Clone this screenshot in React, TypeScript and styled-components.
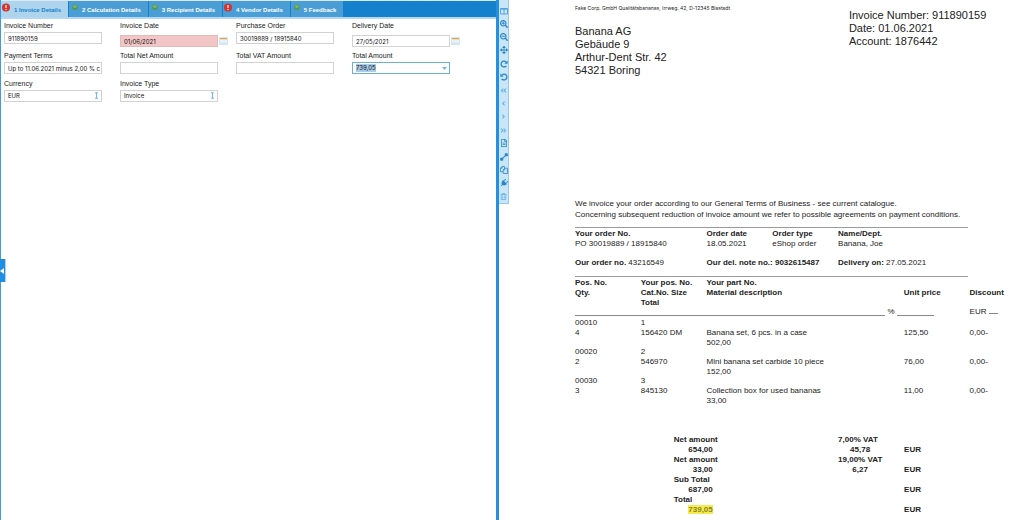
import React from "react";
import styled, { createGlobalStyle, css } from "styled-components";
import {
  FaSearchPlus,
  FaSearchMinus,
  FaArrowsAlt,
  FaAngleDoubleLeft,
  FaAngleLeft,
  FaAngleRight,
  FaAngleDoubleRight,
  FaRegFileAlt,
  FaPlug,
  FaRegTrashAlt,
} from "react-icons/fa";

const GlobalStyle = createGlobalStyle`
  * { box-sizing: border-box; }
  body {
    margin: 0;
    background: #fff;
    color: #222;
    font-family: "Liberation Sans", Arial, sans-serif;
  }
  button, input, select { font-family: inherit; margin: 0; }
`;

const Page = styled.div`
  position: relative;
  display: grid;
  grid-template-columns: minmax(0, 499fr) 10px minmax(0, 515fr);
  min-height: 100vh;
`;

/* ---------- form side ---------- */

const FormPanel = styled.section`
  border-left: 1px solid #3d9be6;
  border-right: 3px solid #2590e2;
`;

const TabBar = styled.div`
  display: flex;
  gap: 1px;
  height: 19px;
  border-top: 1px solid #d9eaf6;
  border-bottom: 2px solid #b4d8f1;
  background: #1581cd;
`;

const Tab = styled.button<{ $active?: boolean }>`
  display: flex;
  align-items: flex-start;
  gap: 4px;
  padding: 1px 7px 0 1px;
  border: 0;
  background: ${(p) => (p.$active ? "#add3ed" : "#4a9dd5")};
  color: ${(p) => (p.$active ? "#1482cf" : "#fff")};
  font-size: 6px;
  font-weight: bold;
  line-height: 16px;
  white-space: nowrap;
`;

const TabIcon = styled.svg`
  width: 8px;
  height: 10px;
  flex: none;
`;

const FieldGrid = styled.form`
  display: grid;
  grid-template-columns: repeat(4, 116px);
  grid-template-rows: 30px 28px 24px;
  padding: 1px 0 0 3px;
`;

const Field = styled.div`
  display: flex;
  flex-direction: column;
`;

const FieldLabel = styled.label`
  font-size: 7px;
  line-height: 12px;
  color: #222;
  white-space: nowrap;
`;

const FieldLine = styled.div<{ $date?: boolean }>`
  display: flex;
  align-items: center;
  gap: 1px;
  padding-top: ${(p) => (p.$date ? 3 : 0)}px;
`;

const valueFont = css`
  font-family: Inter, "Liberation Sans", sans-serif;
  font-size: 6px;
  line-height: 10px;
  color: #111;
`;

const boxStyle = css`
  ${valueFont}
  width: 98px;
  height: 12px;
  border: 1px solid #d2d2d2;
  border-radius: 0;
  outline: none;
`;

const TextBox = styled.input<{ $error?: boolean }>`
  ${boxStyle}
  padding: 0 0 0 3px;
  background: ${(p) => (p.$error ? "#f2c6c6" : "#fff")};
  border-color: ${(p) => (p.$error ? "#e3b9b9" : "#d2d2d2")};
`;

const CalendarButton = styled.button`
  width: 9px;
  height: 10px;
  padding: 0;
  border: 0;
  background: none;
  display: flex;
`;

const SelectWrap = styled.div`
  position: relative;
  display: flex;
`;

const SelectBox = styled.select`
  ${boxStyle}
  appearance: none;
  padding: 0 0 0 3px;
  background: #fff;
`;

const SelectMark = styled.svg`
  position: absolute;
  right: 3px;
  top: 2px;
  width: 5px;
  height: 7px;
  pointer-events: none;
`;

const Combo = styled.div`
  ${boxStyle}
  display: flex;
  align-items: center;
  justify-content: space-between;
  padding: 0 2px 0 3px;
  border-color: #6aaee3;
`;

const ComboInput = styled.input`
  ${valueFont}
  width: 20px;
  height: 8px;
  padding: 0;
  border: 0;
  outline: none;
  background: #a9cbe8;
`;

const ComboButton = styled.button`
  display: flex;
  padding: 0;
  border: 0;
  background: none;
`;

const CollapseHandle = styled.button`
  position: absolute;
  left: 0;
  top: 259px;
  width: 6px;
  height: 23px;
  padding: 0;
  border: 0;
  border-right: 1px solid #a9d4f5;
  background: #1e8fe4;
  display: flex;
  align-items: center;
`;

/* ---------- tool strip ---------- */

const ToolStrip = styled.div`
  display: flex;
  flex-direction: column;
  align-self: start;
  height: 204px;
  padding-top: 4px;
  border-right: 1px solid #94c9f0;
  border-bottom: 1px solid #94c9f0;
  background: #c9e5fa;
`;

const Tool = styled.button<{ $soft?: boolean }>`
  flex: 1;
  display: flex;
  align-items: center;
  justify-content: center;
  padding: 0;
  border: 0;
  background: none;
  color: ${(p) => (p.$soft ? "#63aee6" : "#2685cb")};
  font-size: ${(p) => (p.$soft ? 7 : 8)}px;
`;

const TiltedPlug = styled(FaPlug)`
  transform: rotate(45deg);
`;

/* ---------- document side ---------- */

const Sheet = styled.article`
  padding-left: 66px;
  overflow: hidden;
  font-size: 8px;
  line-height: 10px;
  white-space: nowrap;
`;

const Head = styled.header`
  display: grid;
  grid-template-columns: 61% 39%;
  height: 198px;
`;

const Sender = styled.p`
  margin: 3px 0 12px;
  font-family: Inter, "Liberation Sans", sans-serif;
  font-size: 5px;
  line-height: 10px;
`;

const Address = styled.address`
  font-style: normal;
  font-size: 11px;
  line-height: 13px;
`;

const Meta = styled.p`
  margin: 9px 0 0;
  font-size: 11px;
  line-height: 13px;
`;

const Intro = styled.p`
  margin: 0 0 7px;
  line-height: 11px;
`;

const Ruled = styled.section<{ $height: number }>`
  min-height: ${(p) => p.$height}px;

  &::before {
    content: "";
    display: block;
    width: 393px;
    max-width: 100%;
    margin-bottom: 1px;
    border-top: 1px solid #9a9a9a;
  }
`;

const DataTable = styled.table`
  width: 100%;
  table-layout: fixed;
  border-collapse: collapse;

  th, td {
    padding: 0;
    height: 10px;
    text-align: left;
    vertical-align: top;
  }
`;

const SpacedRow = styled.tr`
  && td { padding-top: 9px; }
`;

const TightRow = styled.tr`
  && th, && td {
    height: 9px;
    line-height: 9px;
  }
`;

const UnitRow = styled.tr`
  && td {
    height: 11px;
    line-height: 9px;
  }
`;

const Col = styled.col`
  width: 14.65%;
`;

const UnitLine = styled.span`
  display: flex;
  align-items: flex-end;
  gap: 2px;
  padding-right: 36px;
`;

const Blank = styled.span<{ $width?: number }>`
  display: inline-block;
  flex: ${(p) => (p.$width ? "none" : "1")};
  width: ${(p) => (p.$width ? p.$width + "px" : "auto")};
  border-bottom: 1px solid #8a8a8a;
`;

const TotalsTable = styled(DataTable)`
  margin-top: 29px;
  font-weight: bold;
`;

const TotalsCol = styled.col<{ $share: number }>`
  width: ${(p) => p.$share}%;
`;

const Amount = styled.span`
  display: block;
  width: 39px;
  text-align: right;
`;

const VatAmount = styled.span`
  display: block;
  width: 44px;
  text-align: center;
`;

const Marked = styled.mark`
  background: #f4ec4e;
  color: #8d8420;
`;

function ErrorIcon() {
  return (
    <TabIcon viewBox="0 0 8 10" aria-hidden="true">
      <circle cx="4" cy="5.5" r="4" fill="#d9302c" />
      <path d="M4 2.9v3" stroke="#fff" strokeWidth="1.2" />
      <circle cx="4" cy="7.5" r="0.7" fill="#fff" />
    </TabIcon>
  );
}

function OkIcon() {
  return (
    <TabIcon viewBox="0 0 8 10" aria-hidden="true">
      <circle cx="5" cy="5.3" r="2.8" fill="#4f9a55" />
      <ellipse cx="4.9" cy="4.6" rx="1.8" ry="1.3" fill="#86b95c" />
    </TabIcon>
  );
}

function CalendarIcon() {
  return (
    <svg width="9" height="10" viewBox="0 0 9 10" aria-hidden="true">
      <rect x="0" y="1" width="9" height="8" fill="#d3e6f7" />
      <rect x="1" y="2" width="7" height="1.5" fill="#e9a63c" />
      <rect x="1" y="3.5" width="7" height="3" fill="#e9f2fa" />
    </svg>
  );
}

function ColumnsIcon() {
  return (
    <svg width="8" height="8" viewBox="0 0 8 8" fill="none" stroke="#4c9ed9" aria-hidden="true">
      <path d="M.5 1.5h7v5.5h-7zM4 1.5V7M.5 2.2h7" strokeWidth="0.9" />
    </svg>
  );
}

function TurnIcon({ left }: { left?: boolean }) {
  return (
    <svg width="8" height="8" viewBox="0 0 8 8" aria-hidden="true">
      <g transform={left ? "translate(8 0) scale(-1 1)" : undefined}>
        <path d="M6.3 5.8A2.9 2.9 0 1 1 6 2" fill="none" stroke="currentColor" strokeWidth="1.3" />
        <path d="M7.6.5v3.2H4.4z" fill="currentColor" />
      </g>
    </svg>
  );
}

function LinkDotsIcon() {
  return (
    <svg width="8" height="8" viewBox="0 0 8 8" fill="currentColor" aria-hidden="true">
      <path d="M1.6 6.4l4.8-4.8" stroke="currentColor" strokeWidth="1.1" />
      <rect x="0.2" y="4.8" width="3" height="3" rx="0.8" />
      <rect x="4.8" y="0.2" width="3" height="3" rx="0.8" />
    </svg>
  );
}

function PagesIcon() {
  return (
    <svg width="8" height="8" viewBox="0 0 8 8" fill="none" stroke="currentColor" strokeWidth="0.8" aria-hidden="true">
      <path d="M3 5.8H.5V2.2L2.2.5h2.3v1.4M2.2.5v1.7H.5" />
      <path d="M4.8 2.2h2.7v5.3H3.2V3.9zM4.8 2.2v1.7H3.2" />
    </svg>
  );
}

function ChoiceMark() {
  return (
    <SelectMark viewBox="0 0 5 7" fill="none" stroke="#5db0ec" strokeWidth="0.9" aria-hidden="true">
      <path d="M1 .8h3M2.5.8v5.4M1 6.2h3" />
    </SelectMark>
  );
}

const tabs = [
  { label: "1 Invoice Details", ok: false, active: true },
  { label: "2 Calculation Details", ok: true },
  { label: "3 Recipient Details", ok: true },
  { label: "4 Vendor Details", ok: false },
  { label: "5 Feedback", ok: true },
];

const tools = [
  { name: "Split view", icon: <ColumnsIcon /> },
  { name: "Zoom in", icon: <FaSearchPlus /> },
  { name: "Zoom out", icon: <FaSearchMinus /> },
  { name: "Move", icon: <FaArrowsAlt /> },
  { name: "Rotate right", icon: <TurnIcon /> },
  { name: "Rotate left", icon: <TurnIcon left /> },
  { name: "First page", icon: <FaAngleDoubleLeft />, soft: true },
  { name: "Previous page", icon: <FaAngleLeft />, soft: true },
  { name: "Next page", icon: <FaAngleRight />, soft: true },
  { name: "Last page", icon: <FaAngleDoubleRight />, soft: true },
  { name: "Text", icon: <FaRegFileAlt /> },
  { name: "Connect", icon: <LinkDotsIcon /> },
  { name: "Copy", icon: <PagesIcon /> },
  { name: "Plug", icon: <TiltedPlug /> },
  { name: "Delete", icon: <FaRegTrashAlt />, soft: true },
];

const items = [
  { pos: "00010", yourPos: "1", qty: "4", cat: "156420 DM", text: "Banana set, 6 pcs. in a case", total: "502,00", price: "125,50" },
  { pos: "00020", yourPos: "2", qty: "2", cat: "546970", text: "Mini banana set carbide 10 piece", total: "152,00", price: "76,00" },
  { pos: "00030", yourPos: "3", qty: "3", cat: "845130", text: "Collection box for used bananas", total: "33,00", price: "11,00" },
];

const totals = [
  { label: "Net amount", amount: "654,00", vat: "7,00% VAT", vatAmount: "45,78" },
  { label: "Net amount", amount: "33,00", vat: "19,00% VAT", vatAmount: "6,27" },
  { label: "Sub Total", amount: "687,00" },
  { label: "Total", amount: "739,05", marked: true },
];

function TextField({ id, label, value = "" }: { id: string; label: string; value?: string }) {
  return (
    <Field>
      <FieldLabel htmlFor={id}>{label}</FieldLabel>
      <FieldLine>
        <TextBox id={id} defaultValue={value} />
      </FieldLine>
    </Field>
  );
}

function DateField({ id, label, value, error }: { id: string; label: string; value: string; error?: boolean }) {
  return (
    <Field>
      <FieldLabel htmlFor={id}>{label}</FieldLabel>
      <FieldLine $date>
        <TextBox id={id} defaultValue={value} $error={error} />
        <CalendarButton type="button" aria-label={`Pick ${label}`}>
          <CalendarIcon />
        </CalendarButton>
      </FieldLine>
    </Field>
  );
}

function SelectField({ id, label, value }: { id: string; label: string; value: string }) {
  return (
    <Field>
      <FieldLabel htmlFor={id}>{label}</FieldLabel>
      <FieldLine>
        <SelectWrap>
          <SelectBox id={id} defaultValue={value}>
            <option>{value}</option>
          </SelectBox>
          <ChoiceMark />
        </SelectWrap>
      </FieldLine>
    </Field>
  );
}

function InvoiceForm() {
  return (
    <FormPanel>
      <TabBar role="tablist">
        {tabs.map((t) => (
          <Tab key={t.label} type="button" role="tab" aria-selected={!!t.active} $active={t.active}>
            {t.ok ? <OkIcon /> : <ErrorIcon />}
            {t.label}
          </Tab>
        ))}
      </TabBar>
      <FieldGrid>
        <TextField id="number" label="Invoice Number" value="911890159" />
        <DateField id="date" label="Invoice Date" value="01/06/2021" error />
        <TextField id="order" label="Purchase Order" value="30019889 / 18915840" />
        <DateField id="delivery" label="Delivery Date" value="27/05/2021" />
        <TextField id="terms" label="Payment Terms" value="Up to 11.06.2021 minus 2,00 % c" />
        <TextField id="net" label="Total Net Amount" />
        <TextField id="vat" label="Total VAT Amount" />
        <Field>
          <FieldLabel htmlFor="total">Total Amount</FieldLabel>
          <Combo>
            <ComboInput id="total" defaultValue="739,05" />
            <ComboButton type="button" aria-label="Show amounts">
              <svg width="5" height="3" viewBox="0 0 5 3" aria-hidden="true">
                <path d="M0 0h5L2.5 3z" fill="#6db4e8" />
              </svg>
            </ComboButton>
          </Combo>
        </Field>
        <SelectField id="currency" label="Currency" value="EUR" />
        <SelectField id="type" label="Invoice Type" value="Invoice" />
      </FieldGrid>
      <CollapseHandle type="button" aria-label="Collapse panel">
        <svg width="5" height="8" viewBox="0 0 5 8" aria-hidden="true">
          <path d="M4 1v6L0 4z" fill="#fff" />
        </svg>
      </CollapseHandle>
    </FormPanel>
  );
}

function SevenColumns() {
  return (
    <colgroup>
      <Col />
      <Col />
      <Col />
      <Col />
      <Col />
      <Col />
      <col />
    </colgroup>
  );
}

function DocumentView() {
  return (
    <Sheet>
      <Head>
        <div>
          <Sender>Fake Corp. GmbH Qualitätsbananas, Irrweg. 42, D-12345 Blastadt</Sender>
          <Address>
            Banana AG
            <br />
            Gebäude 9
            <br />
            Arthur-Dent Str. 42
            <br />
            54321 Boring
          </Address>
        </div>
        <Meta>
          Invoice Number: 911890159
          <br />
          Date: 01.06.2021
          <br />
          Account: 1876442
        </Meta>
      </Head>
      <Intro>
        We invoice your order according to our General Terms of Business - see current catalogue.
        <br />
        Concerning subsequent reduction of invoice amount we refer to possible agreements on payment conditions.
      </Intro>
      <Ruled $height={49}>
        <DataTable>
          <SevenColumns />
          <tbody>
            <tr>
              <th colSpan={2}>Your order No.</th>
              <th>Order date</th>
              <th>Order type</th>
              <th colSpan={3}>Name/Dept.</th>
            </tr>
            <tr>
              <td colSpan={2}>PO 30019889 / 18915840</td>
              <td>18.05.2021</td>
              <td>eShop order</td>
              <td colSpan={3}>Banana, Joe</td>
            </tr>
            <SpacedRow>
              <td colSpan={2}>
                <b>Our order no.</b> 43216549
              </td>
              <td colSpan={2}>
                <b>Our del. note no.: 9032615487</b>
              </td>
              <td colSpan={3}>
                <b>Delivery on:</b> 27.05.2021
              </td>
            </SpacedRow>
          </tbody>
        </DataTable>
      </Ruled>
      <Ruled $height={130}>
        <DataTable>
          <SevenColumns />
          <thead>
            <tr>
              <th>Pos. No.</th>
              <th>Your pos. No.</th>
              <th colSpan={5}>Your part No.</th>
            </tr>
            <tr>
              <th>Qty.</th>
              <th>Cat.No. Size</th>
              <th colSpan={3}>Material description</th>
              <th>Unit price</th>
              <th>Discount</th>
            </tr>
            <TightRow>
              <td />
              <th colSpan={6}>Total</th>
            </TightRow>
            <UnitRow>
              <td colSpan={6}>
                <UnitLine>
                  <Blank />%<Blank $width={37} />
                </UnitLine>
              </td>
              <td>
                EUR <Blank $width={9} />
              </td>
            </UnitRow>
          </thead>
          {items.map((i) => (
            <tbody key={i.pos}>
              <tr>
                <td>{i.pos}</td>
                <td colSpan={6}>{i.yourPos}</td>
              </tr>
              <tr>
                <td>{i.qty}</td>
                <td>{i.cat}</td>
                <td colSpan={3}>{i.text}</td>
                <td>{i.price}</td>
                <td>0,00-</td>
              </tr>
              <TightRow>
                <td colSpan={2} />
                <td colSpan={5}>{i.total}</td>
              </TightRow>
            </tbody>
          ))}
        </DataTable>
      </Ruled>
      <TotalsTable>
        <colgroup>
          <TotalsCol $share={22} />
          <TotalsCol $share={36.6} />
          <TotalsCol $share={14.7} />
          <col />
        </colgroup>
        {totals.map((t, n) => (
          <tbody key={n}>
            <tr>
              <td />
              <td>{t.label}</td>
              <td colSpan={2}>{t.vat}</td>
            </tr>
            <tr>
              <td />
              <td>
                <Amount>{t.marked ? <Marked>{t.amount}</Marked> : t.amount}</Amount>
              </td>
              <td>
                <VatAmount>{t.vatAmount}</VatAmount>
              </td>
              <td>EUR</td>
            </tr>
          </tbody>
        ))}
      </TotalsTable>
    </Sheet>
  );
}

export default function App() {
  return (
    <>
      <GlobalStyle />
      <Page>
        <InvoiceForm />
        <ToolStrip role="toolbar" aria-label="Document tools">
          {tools.map((t) => (
            <Tool key={t.name} type="button" aria-label={t.name} $soft={t.soft}>
              {t.icon}
            </Tool>
          ))}
        </ToolStrip>
        <DocumentView />
      </Page>
    </>
  );
}
